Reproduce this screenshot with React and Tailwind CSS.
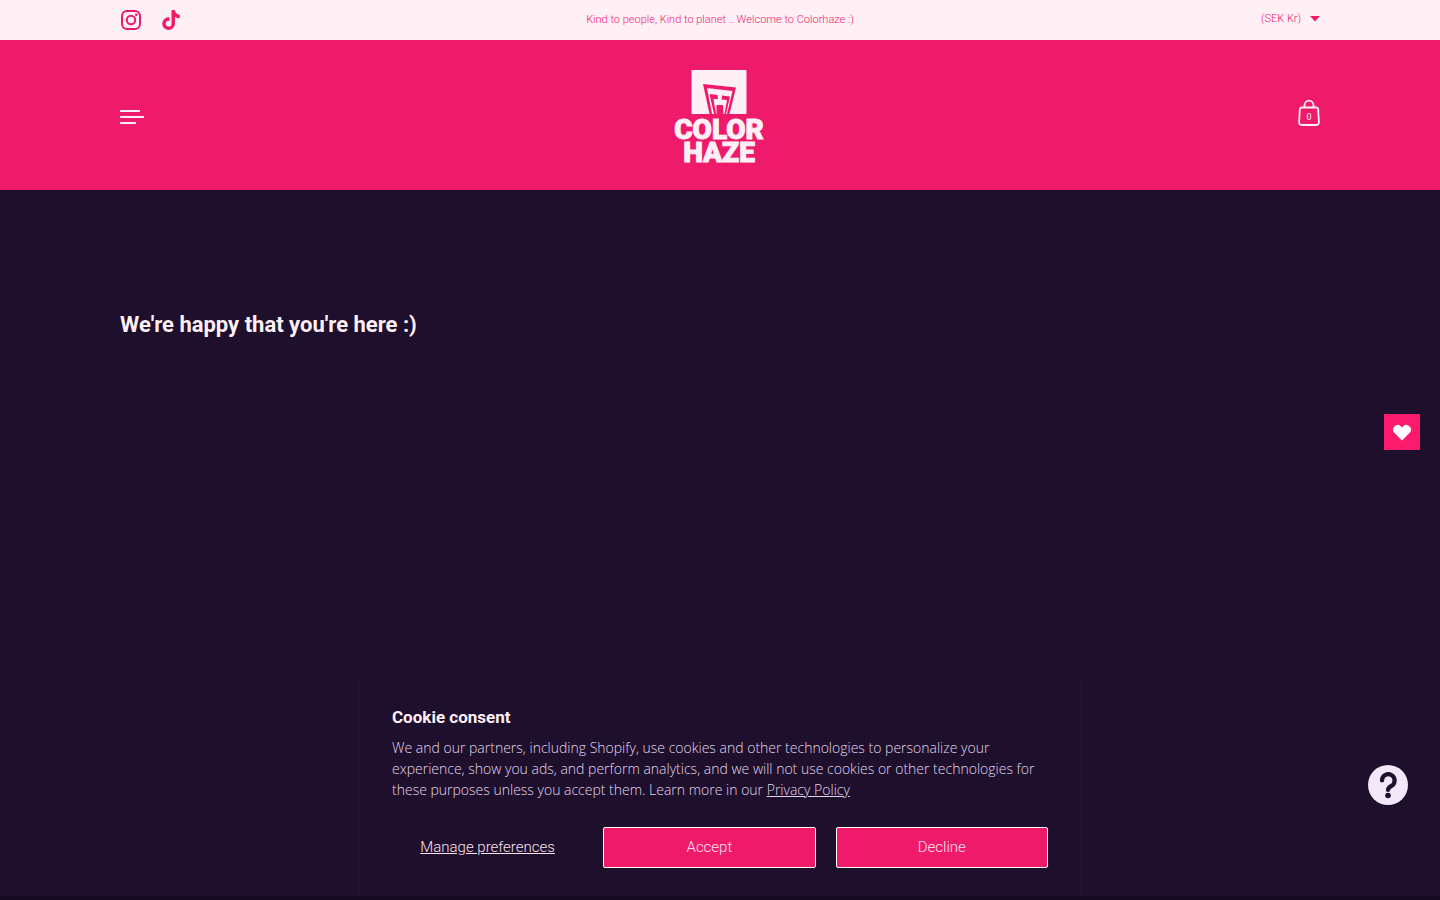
import React, { useState } from 'react';
import { FaTiktok } from 'react-icons/fa';

const InstagramIcon = () => (
  <svg viewBox="0 0 22 22" className="size-[22px]" fill="none" stroke="currentColor" strokeWidth="2">
    <rect x="2" y="2" width="18" height="18" rx="5" />
    <circle cx="11" cy="11" r="4.2" />
    <circle cx="16.3" cy="5.8" r="1.3" fill="currentColor" stroke="none" />
  </svg>
);

const MenuIcon = () => (
  <svg viewBox="0 0 24 16" className="h-4 w-6" fill="currentColor">
    <rect x="0" y="1" width="20" height="2" rx="0.5" />
    <rect x="0" y="7" width="24" height="2" rx="0.5" />
    <rect x="0" y="13" width="16" height="2" rx="0.5" />
  </svg>
);

const BagIcon = () => (
  <svg viewBox="0 0 22 28" className="h-7 w-[22px]" fill="none" stroke="currentColor" strokeWidth="1.8">
    <path d="M3.6 8.5h14.8c1 0 1.7.7 1.8 1.7l.7 13c.1 1.6-.9 2.8-2.5 2.8H3.6C2 26 1 24.8 1.1 23.2l.7-13c.1-1 .8-1.7 1.8-1.7z" />
    <path d="M6.5 8.5V6.2a4.5 4.5 0 0 1 9 0v2.3" />
  </svg>
);

const Logo = () => (
  <svg viewBox="0 0 94 96" className="h-24 w-[94px] overflow-visible" fill="#fff0f6" role="img" aria-label="Color Haze">
    <rect x="18.5" y="3" width="55" height="44" rx="1" />
    <g fill="#ef1a69">
      {/* tapered frame, then the cut-outs of the mark inside it */}
      <path d="M30 17L63 20.5L56.5 47H54L59.5 24L34 21L39 47H36.5z" />
      <path d="M36.5 27L44.5 28L45 32H40.5L43 47H41z" />
      <path d="M49 28.5L57 29.5L53 47H51.5L54 33L48.5 32.5z" />
      <path d="M43.5 38H50L50.5 47H43.5z" />
    </g>
    <g fontFamily="Roboto, sans-serif" fontWeight="900" fontSize="28" stroke="#fff0f6" strokeWidth="1" textAnchor="middle">
      <text x="46" y="72">COLOR</text>
      <text x="46" y="95">HAZE</text>
    </g>
  </svg>
);

const CookieBanner = ({ onClose }) => (
  <section
    aria-label="Cookie consent"
    className="w-full max-w-[724px] border-x-2 border-[#24142f] bg-[#1e0f2d] px-8 py-7"
  >
    <h2 className="text-[17px] leading-6 font-bold">Cookie consent</h2>
    <p className="mt-2 font-['Open_Sans',sans-serif] text-[14px] leading-[21px] font-light text-[#e2d6ec]">
      We and our partners, including Shopify, use cookies and other technologies to personalize your
      experience, show you ads, and perform analytics, and we will not use cookies or other technologies for
      these purposes unless you accept them. Learn more in our{' '}
      <a href="#privacy" className="underline">Privacy Policy</a>
    </p>
    <div className="mt-[27px] grid grid-cols-[9fr_10fr_10fr] gap-5 text-[15px] font-light text-[#ffe0ee]">
      <button type="button" className="h-[41px] underline">Manage preferences</button>
      <button type="button" onClick={onClose} className="h-[41px] rounded-xs border border-white bg-[#ef1a69]">Accept</button>
      <button type="button" onClick={onClose} className="h-[41px] rounded-xs border border-white bg-[#ef1a69]">Decline</button>
    </div>
  </section>
);

export default function App() {
  const [showBanner, setShowBanner] = useState(true);

  return (
    <div className="flex min-h-screen flex-col bg-[#1e0f2d] font-['Roboto',sans-serif] text-[#fff0f6]">
      {/* Announcement bar */}
      <div className="grid h-10 grid-cols-3 items-center bg-[#fff0f6] px-[120px] text-[11px] text-[#ef1a69]">
        <div className="flex items-center gap-[19px]">
          <a href="#instagram" aria-label="Instagram"><InstagramIcon /></a>
          <a href="#tiktok" aria-label="TikTok"><FaTiktok className="size-5" /></a>
        </div>
        <p className="text-center font-light whitespace-nowrap">Kind to people, Kind to planet .. Welcome to Colorhaze :)</p>
        <label className="flex items-center justify-end gap-2 pb-0.5">
          <select aria-label="Currency" className="appearance-none bg-transparent font-light">
            <option>(SEK Kr)</option>
          </select>
          <svg viewBox="0 0 10 6" className="h-[6px] w-[10px]" fill="currentColor"><path d="M0 0h10L5 5.5z" /></svg>
        </label>
      </div>

      {/* Header */}
      <header className="grid h-[150px] grid-cols-3 items-center bg-[#ef1a69] px-[120px]">
        <button type="button" aria-label="Menu" className="justify-self-start pt-1"><MenuIcon /></button>
        <a href="#home" className="justify-self-center"><Logo /></a>
        <button type="button" aria-label="Cart" className="relative justify-self-end pb-1">
          <BagIcon />
          <span className="absolute inset-x-0 top-3 text-center text-[9px] leading-3">0</span>
        </button>
      </header>

      <main className="flex-1 px-[120px] pt-[119px]">
        <h1 className="text-[22px] leading-8 font-bold">We're happy that you're here :)</h1>
      </main>

      {/* Floating widgets */}
      <button type="button" aria-label="Wishlist" className="fixed top-[46%] right-5 grid size-9 place-items-center bg-[#fb1a6b]">
        <svg viewBox="0 0 20 18" className="h-[18px] w-5" fill="#fff">
          <path d="M10 17.5L2.3 9.8A4.6 4.6 0 0 1 8.8 3.3L10 4.5l1.2-1.2a4.6 4.6 0 0 1 6.5 6.5z" />
        </svg>
      </button>
      <button type="button" aria-label="Help" className="fixed right-8 bottom-[95px]">
        <svg viewBox="0 0 40 40" className="size-10">
          <circle cx="20" cy="20" r="20" fill="#f1e8fa" />
          <path d="M14 15.5a6.3 6.3 0 1 1 9.5 5.4c-2.2 1.3-3.5 2.1-3.5 4" fill="none" stroke="#1e0f2d" strokeWidth="4.2" strokeLinecap="round" />
          <circle cx="20" cy="30.5" r="2.8" fill="#1e0f2d" />
        </svg>
      </button>

      {showBanner && (
        <div className="fixed inset-x-0 bottom-0 flex justify-center border-b-4 border-[#160a22]">
          <CookieBanner onClose={() => setShowBanner(false)} />
        </div>
      )}
    </div>
  );
}
